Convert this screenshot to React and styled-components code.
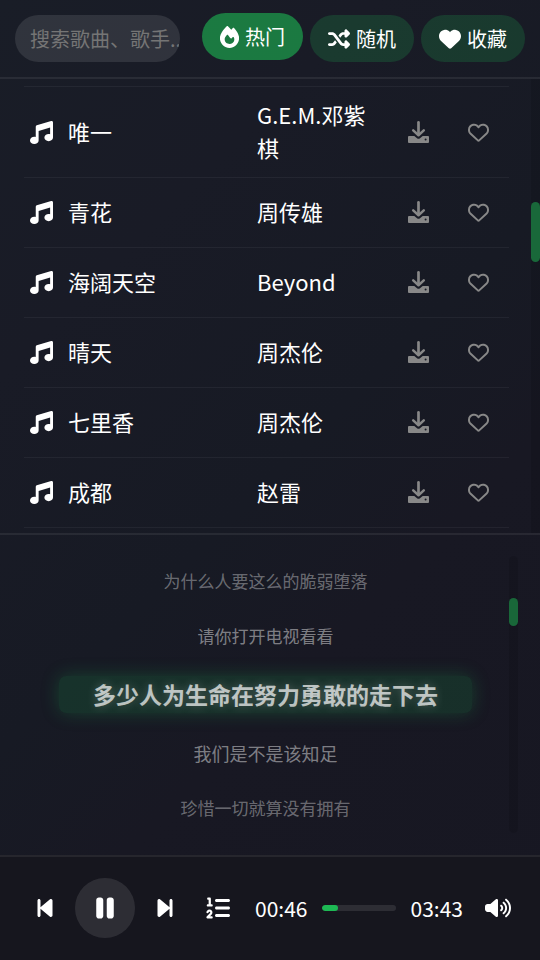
import React, { useState } from 'react'
import styled, { createGlobalStyle } from 'styled-components'
import {
  FaBackwardStep,
  FaFire,
  FaForwardStep,
  FaHeart,
  FaListOl,
  FaMusic,
  FaPause,
  FaPlay,
  FaRegHeart,
  FaShuffle,
  FaVolumeHigh,
} from 'react-icons/fa6'

const GlobalStyle = createGlobalStyle`
  * {
    box-sizing: border-box;
  }
  body {
    margin: 0;
    background: #171924;
    color: #fff;
    font-family: "Noto Sans CJK SC", sans-serif;
  }
  button, input {
    font-family: inherit;
    color: inherit;
  }
  button {
    border: none;
    padding: 0;
    cursor: pointer;
  }
`
const Page = styled.div`
  display: flex;
  flex-direction: column;
  height: 100vh;
  background: linear-gradient(135deg, #191d27 0%, #191b26 25%, #171a24 50%, #181823 65%, #171722 100%);
`
const Toolbar = styled.header`
  display: flex;
  align-items: center;
  padding: 15px;
  border-bottom: 2px solid rgba(255, 255, 255, 0.07);
`
const SearchInput = styled.input`
  flex: 1;
  min-width: 0;
  height: 47px;
  margin-right: 22px;
  padding: 0 0 0 15px;
  border: none;
  border-radius: 24px;
  outline: none;
  background: rgba(255, 255, 255, 0.1);
  font-size: 20px;
  &::placeholder {
    color: #757575;
  }
`
const FilterList = styled.nav`
  display: flex;
  gap: 7px;
`
const FilterButton = styled.button`
  display: flex;
  align-items: center;
  gap: 6px;
  height: 47px;
  padding: 0 18px;
  border-radius: 24px;
  background: rgba(29, 185, 84, 0.2);
  font-size: 20px;
  svg {
    width: ${props => props.$iconWidth}px;
    height: 22px;
  }
  ${props => props.$active && `
    background: rgba(29, 185, 84, 0.6);
    transform: translateY(-2px);
  `}
`
const SongPanel = styled.main`
  display: flex;
  flex: 1;
  min-height: 0;
`
const SongList = styled.ul`
  flex: 1;
  margin: 0;
  padding: 7px 22px 0 24px;
  list-style: none;
  overflow: hidden;
`
const SongRow = styled.li`
  display: grid;
  grid-template-columns: 38px 13fr 9fr 60px 60px;
  align-items: center;
  padding: 11px 1px 11px 6px;
  border-bottom: 1px solid rgba(255, 255, 255, 0.05);
  font-size: 22px;
  line-height: 33px;
  &:first-child {
    border-top: 1px solid rgba(255, 255, 255, 0.05);
  }
`
const NoteIcon = styled(FaMusic)`
  font-size: 23px;
`
const Title = styled.span`
  padding-bottom: 2px;
`
const Artist = styled(Title)`
  padding-right: 15px;
`
const RowButton = styled.button`
  display: flex;
  align-items: center;
  justify-content: center;
  height: 47px;
  background: none;
  color: #888;
  font-size: 21px;
`
const Scrollbar = styled.div`
  display: grid;
  grid-template-rows: ${props => props.$before}fr ${props => props.$size}fr ${props => props.$after}fr;
  width: 9px;
  border-radius: ${props => props.$rounded ? '5px' : '0'};
  background: rgba(0, 0, 0, 0.1);
`
const Thumb = styled.div`
  grid-row: 2;
  border-radius: 5px;
  background: rgba(29, 185, 84, 0.5);
`
const LyricPanel = styled.section`
  display: flex;
  padding: 21px 22px 22px;
  border-top: 2px solid rgba(255, 255, 255, 0.07);
`
const LyricLines = styled.div`
  display: flex;
  flex: 1;
  flex-direction: column;
  align-items: center;
  gap: 25px;
  padding: 10px 0;
`
const LyricLine = styled.p`
  margin: 0;
  color: rgba(255, 255, 255, ${props => props.$distance === 1 ? 0.46 : 0.37});
  font-size: ${props => props.$next ? 18 : 17}px;
  line-height: 30px;
  text-align: center;
`
const CurrentLine = styled(LyricLine)`
  width: 85%;
  border-radius: 7px;
  background: rgba(29, 185, 84, 0.15);
  box-shadow: 0 0 18px rgba(29, 185, 84, 0.25);
  color: rgba(255, 255, 255, 0.7);
  font-size: 23px;
  font-weight: bold;
  line-height: 37px;
  text-shadow: 0 0 10px rgba(255, 255, 255, 0.25);
`
const Player = styled.footer`
  display: flex;
  align-items: center;
  padding: 21px 15px 22px;
  border-top: 2px solid rgba(255, 255, 255, 0.07);
  background: #16161e;
`
const PlayerButton = styled.button`
  display: flex;
  align-items: center;
  justify-content: center;
  width: ${props => props.$width || 60}px;
  height: 60px;
  border-radius: 30px;
  background: ${props => props.$filled ? 'rgba(255, 255, 255, 0.1)' : 'none'};
  font-size: ${props => props.$size || 24}px;
`
const Timeline = styled.div`
  display: flex;
  flex: 1;
  align-items: center;
  gap: 15px;
  margin: 0 7px 0 15px;
  font-size: 21px;
`
const Progress = styled.div`
  flex: 1;
  height: 6px;
  border-radius: 3px;
  background: rgba(255, 255, 255, 0.1);
  overflow: hidden;
`
const ProgressFill = styled.div`
  height: 100%;
  border-radius: 3px;
  background: #1db954;
`

const filters = [
  { id: 'hot', label: '热门', Icon: FaFire, iconWidth: 19 },
  { id: 'random', label: '随机', Icon: FaShuffle, iconWidth: 22 },
  { id: 'favorite', label: '收藏', Icon: FaHeart, iconWidth: 22 },
]

const songs = [
  { title: '唯一', artist: 'G.E.M.邓紫棋' },
  { title: '青花', artist: '周传雄' },
  { title: '海阔天空', artist: 'Beyond' },
  { title: '晴天', artist: '周杰伦' },
  { title: '七里香', artist: '周杰伦' },
  { title: '成都', artist: '赵雷' },
]

const lyrics = [
  '为什么人要这么的脆弱堕落',
  '请你打开电视看看',
  '多少人为生命在努力勇敢的走下去',
  '我们是不是该知足',
  '珍惜一切就算没有拥有',
]
const currentLyric = 2

const toSeconds = time => {
  const [minutes, seconds] = time.split(':').map(Number)
  return minutes * 60 + seconds
}

function DownloadIcon() {
  return (
    <svg width="21" height="23" viewBox="0 0 21 23" fill="none" stroke="currentColor" strokeLinecap="round">
      <path d="M10.5 1.4V13" strokeWidth="2.7" />
      <path d="M5.2 9.4L10.5 14.2L15.8 9.4" strokeWidth="2.5" strokeLinejoin="round" />
      <path
        d="M1 15H6.3L9 17.2Q10.5 18.2 12 17.2L14.7 15H20Q21 15 21 16V21Q21 22 20 22H1Q0 22 0 21V16Q0 15 1 15ZM17.6 17.5A1 1 0 1 0 17.6 19.5A1 1 0 1 0 17.6 17.5Z"
        fill="currentColor"
        fillRule="evenodd"
        stroke="none"
      />
    </svg>
  )
}

function Header() {
  const [filter, setFilter] = useState('hot')
  return (
    <Toolbar>
      <SearchInput type="text" aria-label="搜索" placeholder="搜索歌曲、歌手..." />
      <FilterList>
        {filters.map(({ id, label, Icon, iconWidth }) => (
          <FilterButton
            key={id}
            $active={filter === id}
            $iconWidth={iconWidth}
            onClick={() => setFilter(id)}
          >
            <Icon preserveAspectRatio="xMidYMid slice" />
            {label}
          </FilterButton>
        ))}
      </FilterList>
    </Toolbar>
  )
}

function Songs() {
  return (
    <SongPanel>
      <SongList>
        {songs.map(song => (
          <SongRow key={song.title}>
            <NoteIcon />
            <Title>{song.title}</Title>
            <Artist>{song.artist}</Artist>
            <RowButton aria-label="下载"><DownloadIcon /></RowButton>
            <RowButton aria-label="收藏"><FaRegHeart /></RowButton>
          </SongRow>
        ))}
      </SongList>
      <Scrollbar $before={123} $size={60} $after={271}><Thumb /></Scrollbar>
    </SongPanel>
  )
}

function Lyrics() {
  return (
    <LyricPanel>
      <LyricLines>
        {lyrics.map((line, index) => (
          index === currentLyric
            ? <CurrentLine key={line}>{line}</CurrentLine>
            : (
              <LyricLine
                key={line}
                $distance={Math.abs(index - currentLyric)}
                $next={index === currentLyric + 1}
              >
                {line}
              </LyricLine>
            )
        ))}
      </LyricLines>
      <Scrollbar $rounded $before={42} $size={28} $after={207}><Thumb /></Scrollbar>
    </LyricPanel>
  )
}

function PlayerBar() {
  const [playing, setPlaying] = useState(true)
  const current = '00:46'
  const total = '03:43'
  const percent = toSeconds(current) / toSeconds(total) * 100
  return (
    <Player>
      <PlayerButton aria-label="上一首"><FaBackwardStep /></PlayerButton>
      <PlayerButton $filled $size={28} aria-label="播放" onClick={() => setPlaying(!playing)}>
        {playing ? <FaPause /> : <FaPlay />}
      </PlayerButton>
      <PlayerButton aria-label="下一首"><FaForwardStep /></PlayerButton>
      <PlayerButton $width={45} aria-label="播放模式"><FaListOl /></PlayerButton>
      <Timeline>
        <span>{current}</span>
        <Progress>
          <ProgressFill style={{ width: `${percent}%` }} />
        </Progress>
        <span>{total}</span>
      </Timeline>
      <PlayerButton $width={55} $size={26} aria-label="音量"><FaVolumeHigh /></PlayerButton>
    </Player>
  )
}

export default function App() {
  return (
    <Page>
      <GlobalStyle />
      <Header />
      <Songs />
      <Lyrics />
      <PlayerBar />
    </Page>
  )
}
